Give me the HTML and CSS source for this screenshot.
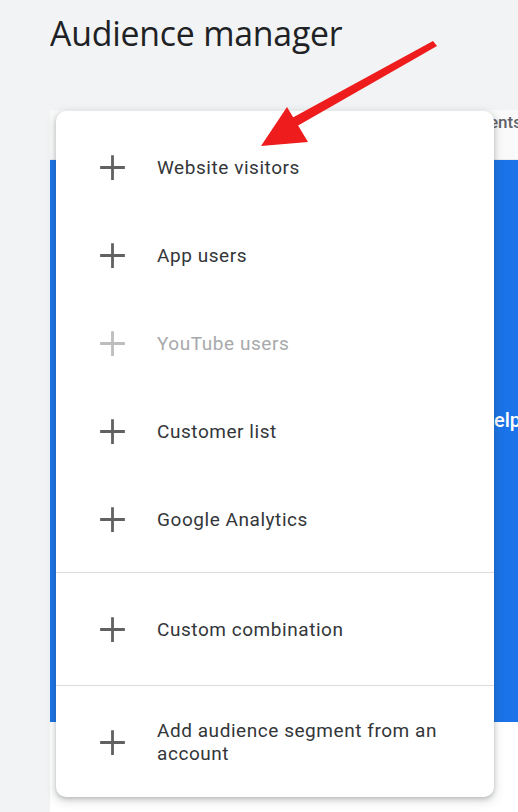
FILE: index.html
```html
<!DOCTYPE html>
<html lang="en">
<head>
<meta charset="utf-8">
<title>Audience manager</title>
<link rel="stylesheet" href="styles.css">
</head>
<body>
<div class="page">
  <aside class="rail"></aside>
  <main class="main">
    <header class="header">
      <h1 class="title">Audience manager</h1>
    </header>
    <section class="content">
      <nav class="tabs"><span class="tab">Audience segments</span></nav>
      <div class="hero"><span class="hero-text">Get help</span></div>
      <div class="below"></div>
    </section>
  </main>

  <div class="menu">
    <ul class="group">
      <li class="item"><svg class="plus" viewBox="0 0 24 24"><path d="M12 1v22M1 12h22"/></svg><span class="label">Website visitors</span></li>
      <li class="item"><svg class="plus" viewBox="0 0 24 24"><path d="M12 1v22M1 12h22"/></svg><span class="label">App users</span></li>
      <li class="item disabled"><svg class="plus" viewBox="0 0 24 24"><path d="M12 1v22M1 12h22"/></svg><span class="label">YouTube users</span></li>
      <li class="item"><svg class="plus" viewBox="0 0 24 24"><path d="M12 1v22M1 12h22"/></svg><span class="label">Customer list</span></li>
      <li class="item"><svg class="plus" viewBox="0 0 24 24"><path d="M12 1v22M1 12h22"/></svg><span class="label">Google Analytics</span></li>
    </ul>
    <ul class="group">
      <li class="item"><svg class="plus" viewBox="0 0 24 24"><path d="M12 1v22M1 12h22"/></svg><span class="label">Custom combination</span></li>
    </ul>
    <ul class="group">
      <li class="item"><svg class="plus" viewBox="0 0 24 24"><path d="M12 1v22M1 12h22"/></svg><span class="label">Add audience segment from an account</span></li>
    </ul>
  </div>

  <svg class="arrow" viewBox="0 0 518 812" aria-hidden="true">
    <polygon points="433,41 437,46 285,133 281,124" />
    <polygon points="261,146 287,107 308,142" />
  </svg>
</div>
</body>
</html>
```

FILE: styles.css
```css
* { box-sizing: border-box; }
html, body {
  margin: 0;
  padding: 0;
}
body {
  width: 518px;
  height: 812px;
  overflow: hidden;
  background: #f1f3f4;
  font-family: Roboto, "Liberation Sans", sans-serif;
  color: #3c4043;
}
.page {
  position: relative;
  display: flex;
  width: 518px;
  height: 812px;
  overflow: hidden;
}
.rail {
  width: 50px;
  flex: 0 0 50px;
  background: #f1f3f4;
}
.main {
  flex: 1;
  min-width: 0;
  display: flex;
  flex-direction: column;
  overflow: hidden;
}
.header {
  height: 110px;
  flex: 0 0 110px;
}
.title {
  margin: 0;
  padding-top: 10px;
  font-family: "Open Sans", Roboto, sans-serif;
  font-weight: 400;
  font-size: 33.8px;
  line-height: 46px;
  color: #202124;
  letter-spacing: -0.2px;
  white-space: nowrap;
}
.content {
  flex: 1;
  display: flex;
  flex-direction: column;
  background: #ffffff;
}
.tabs {
  height: 50px;
  flex: 0 0 50px;
  display: flex;
  justify-content: flex-end;
  overflow: hidden;
  background: #fafafa;
  border-bottom: 1px solid #e8eaed;
}
.tab {
  font-size: 17px;
  line-height: 20px;
  padding-top: 2px;
  margin-right: -4px;
  color: #5f6368;
  font-weight: 500;
  white-space: nowrap;
  flex: none;
}
.hero {
  height: 562px;
  flex: 0 0 562px;
  background: #1a73e8;
  display: flex;
  justify-content: flex-end;
  align-items: flex-start;
  padding-top: 247px;
  overflow: hidden;
}
.hero-text {
  color: #ffffff;
  font-size: 20px;
  line-height: 26px;
  font-weight: 500;
  white-space: nowrap;
  margin-right: -3px;
  flex: none;
}
.below {
  flex: 1;
  background: #ffffff;
}

/* dropdown menu overlay */
.menu {
  position: absolute;
  left: 56px;
  top: 111px;
  width: 438px;
  background: #ffffff;
  border-radius: 10px;
  box-shadow: 0 2px 4px rgba(60,64,67,0.25), 0 3px 10px 2px rgba(60,64,67,0.15);
  padding: 12px 0 11px;
}
.group {
  list-style: none;
  margin: 0;
  padding: 0;
}
.group + .group {
  border-top: 1px solid #dadce0;
  margin-top: 9px;
  padding-top: 12px;
}
.group + .group + .group { margin-top: 12px; }
.item {
  height: 88px;
  display: flex;
  align-items: center;
  padding-left: 43px;
  padding-right: 36px;
}
.plus {
  width: 27px;
  height: 27px;
  flex: 0 0 27px;
  fill: none;
  stroke: #616161;
  stroke-width: 2.5;
  margin-right: 31px;
}
.label {
  font-size: 19px;
  line-height: 23px;
  letter-spacing: 0.55px;
  color: #333639;
}
.disabled .plus { stroke: #bdbdbd; }
.disabled .label { color: #a7a9ac; }

.arrow {
  position: absolute;
  left: 0;
  top: 0;
  width: 518px;
  height: 812px;
  pointer-events: none;
}
.arrow polygon { fill: #ee1c1c; }
```
